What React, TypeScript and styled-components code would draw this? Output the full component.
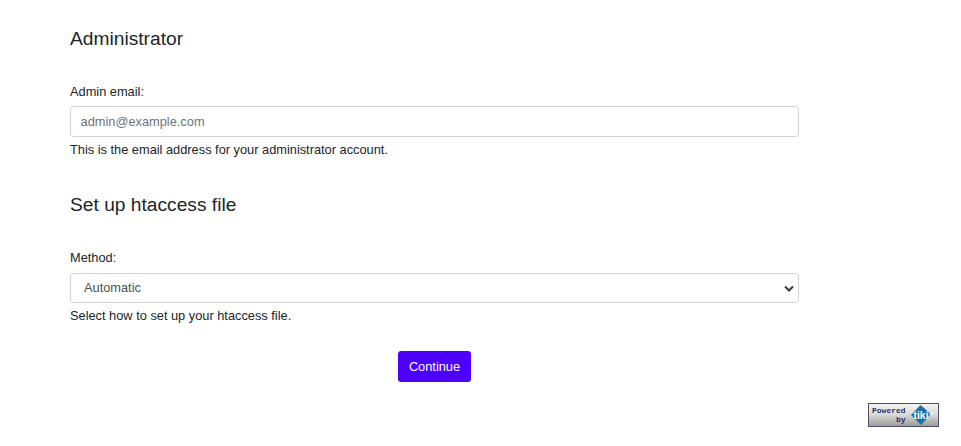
import styled, { createGlobalStyle } from "styled-components";

const GlobalStyle = createGlobalStyle`
  html, body {
    margin: 0;
    padding: 0;
    background: #fff;
  }
  body {
    font-family: "Liberation Sans", Arial, sans-serif;
    font-size: 12.8px;
    line-height: 19.2px;
    color: #212529;
  }
`;

const Page = styled.div`
  width: 961px;
  height: 446px;
  overflow: hidden;
  padding: 27px 22px 0 70px;
  box-sizing: border-box;
`;

const Form = styled.form`
  width: 729px;
  display: flex;
  flex-direction: column;
`;

const Heading = styled.h2`
  margin: 0 0 31px;
  font-size: 19.2px;
  font-weight: 400;
  line-height: 24px;
`;

const Field = styled.div<{ $gap: number }>`
  display: flex;
  flex-direction: column;
  margin-bottom: ${(p) => p.$gap}px;
`;

const Label = styled.label`
  margin-bottom: 5.2px;
`;

const Input = styled.input`
  box-sizing: border-box;
  width: 100%;
  height: 30.8px;
  padding: 0 9.6px;
  border: 1px solid #d0d3d6;
  border-radius: 3.2px;
  font: inherit;
  color: #212529;

  &::placeholder {
    color: #6c757d;
    opacity: 1;
  }
`;

const SelectBox = styled.div`
  position: relative;
  height: 30px;
`;

const Select = styled.select`
  appearance: none;
  box-sizing: border-box;
  width: 100%;
  height: 100%;
  padding: 0 13px;
  border: 1px solid #d0d3d6;
  border-radius: 3.2px;
  background: #fff;
  font: inherit;
  color: #495057;
`;

const Chevron = styled.svg`
  position: absolute;
  right: 4px;
  top: 9px;
  width: 12px;
  height: 12px;
  pointer-events: none;
`;

const Help = styled.div`
  margin-top: 3px;
`;

const Actions = styled.div`
  display: flex;
  justify-content: center;
`;

const Button = styled.button`
  width: 73px;
  height: 31px;
  border: none;
  border-radius: 3.2px;
  background: #4e00ff;
  color: #fff;
  font: inherit;
`;

const Footer = styled.div`
  display: flex;
  justify-content: flex-end;
  margin-top: 21px;
`;

const Badge = styled.div`
  box-sizing: border-box;
  width: 71px;
  height: 24px;
  display: flex;
  align-items: center;
  justify-content: space-between;
  padding: 0 3px;
  border: 1px solid #4a5068;
  background: linear-gradient(#f4f4f2, #d8d9d5 50%, #9c9d9a);
`;

const BadgeText = styled.div`
  display: flex;
  flex-direction: column;
  align-items: flex-end;
  font-family: "Liberation Mono", monospace;
  font-size: 8px;
  font-weight: 700;
  line-height: 9px;
  color: #2c3263;
`;

export default function App() {
  return (
    <Page>
      <GlobalStyle />
      <Form>
        <Heading>Administrator</Heading>
        <Field $gap={34}>
          <Label>Admin email:</Label>
          <Input placeholder="admin@example.com" />
          <Help>This is the email address for your administrator account.</Help>
        </Field>
        <Heading>Set up htaccess file</Heading>
        <Field $gap={26}>
          <Label>Method:</Label>
          <SelectBox>
            <Select defaultValue="auto">
              <option value="auto">Automatic</option>
            </Select>
            <Chevron viewBox="0 0 12 12">
              <path d="M2 4.5l4 4 4-4" fill="none" stroke="#343a40" strokeWidth="2" />
            </Chevron>
          </SelectBox>
          <Help>Select how to set up your htaccess file.</Help>
        </Field>
        <Actions>
          <Button type="button">Continue</Button>
        </Actions>
      </Form>
      <Footer>
        <Badge>
          <BadgeText>
            <span>Powered</span>
            <span>by</span>
          </BadgeText>
          <svg width="24" height="20" viewBox="0 0 24 20">
            <path d="M9.5 0L20 9 10 20 0 10z" fill="#1c6ea4" />
            <path d="M18 7.5l6 0.5-4.5 2.5z" fill="#eef0f0" />
            <text x="10" y="13.5" textAnchor="middle" fontFamily="Liberation Sans" fontSize="10.5" fontWeight="700" fill="#fff">tiki</text>
          </svg>
        </Badge>
      </Footer>
    </Page>
  );
}
